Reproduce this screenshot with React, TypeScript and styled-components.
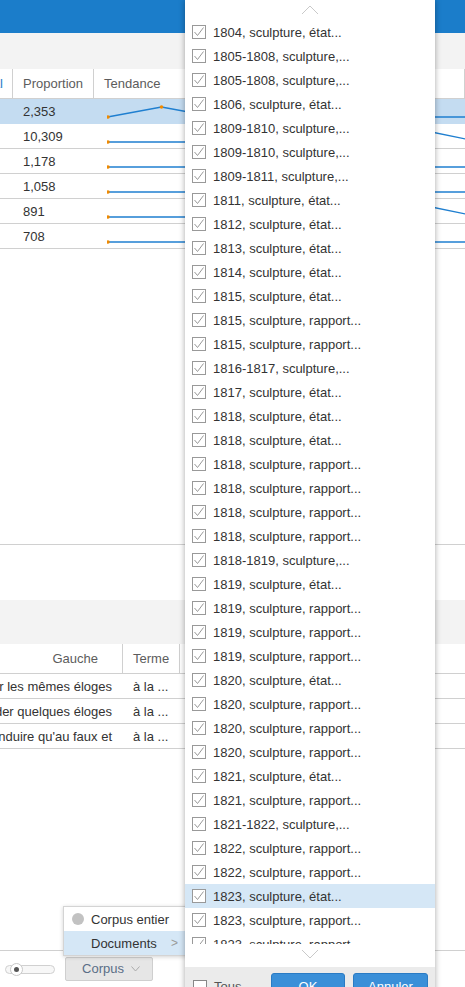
import React from "react";
import styled, { createGlobalStyle } from "styled-components";

const docs = [
  "1804, sculpture, état...",
  "1805-1808, sculpture,...",
  "1805-1808, sculpture,...",
  "1806, sculpture, état...",
  "1809-1810, sculpture,...",
  "1809-1810, sculpture,...",
  "1809-1811, sculpture,...",
  "1811, sculpture, état...",
  "1812, sculpture, état...",
  "1813, sculpture, état...",
  "1814, sculpture, état...",
  "1815, sculpture, état...",
  "1815, sculpture, rapport...",
  "1815, sculpture, rapport...",
  "1816-1817, sculpture,...",
  "1817, sculpture, état...",
  "1818, sculpture, état...",
  "1818, sculpture, état...",
  "1818, sculpture, rapport...",
  "1818, sculpture, rapport...",
  "1818, sculpture, rapport...",
  "1818, sculpture, rapport...",
  "1818-1819, sculpture,...",
  "1819, sculpture, état...",
  "1819, sculpture, rapport...",
  "1819, sculpture, rapport...",
  "1819, sculpture, rapport...",
  "1820, sculpture, état...",
  "1820, sculpture, rapport...",
  "1820, sculpture, rapport...",
  "1820, sculpture, rapport...",
  "1821, sculpture, état...",
  "1821, sculpture, rapport...",
  "1821-1822, sculpture,...",
  "1822, sculpture, rapport...",
  "1822, sculpture, rapport...",
  "1823, sculpture, état...",
  "1823, sculpture, rapport...",
  "1823, sculpture, rapport...",
];

// y of each point inside a 24px row, points every 54px
const trends = [
  { value: "2,353", pts: [18, 8, 18, 18, 18, 18, 18, 18], selected: true },
  { value: "10,309", pts: [18, 18, 18, 18, 18, 18, 8, 19] },
  { value: "1,178", pts: [18, 18, 18, 18, 18, 18, 18, 18] },
  { value: "1,058", pts: [18, 18, 18, 18, 18, 18, 18, 18] },
  { value: "891", pts: [18, 18, 18, 18, 18, 18, 8, 19] },
  { value: "708", pts: [18, 18, 18, 18, 18, 18, 18, 18] },
];

const contexts = [
  { left: "et de répéter les mêmes éloges", term: "à la ..." },
  { left: "pour lui accorder quelques éloges", term: "à la ..." },
  { left: "ne peut le conduire qu'au faux et", term: "à la ..." },
];

const GlobalStyle = createGlobalStyle`
  html, body {
    margin: 0;
    padding: 0;
    overflow: hidden;
  }
  body {
    font-family: "Liberation Sans", Arial, sans-serif;
    font-size: 13px;
    color: #333;
  }
`;

const Page = styled.div`
  position: relative;
  width: 465px;
  height: 987px;
  overflow: hidden;
  display: flex;
  flex-direction: column;
  background: #fff;
`;

const TopBar = styled.div`
  height: 33px;
  background: #1b7dca;
  flex-shrink: 0;
`;

const Panel = styled.div<{ $height: number }>`
  height: ${(p) => p.$height}px;
  border-bottom: 1px solid #d0d0d0;
  display: flex;
  flex-direction: column;
  flex-shrink: 0;
  overflow: hidden;
`;

const Strip = styled.div<{ $height: number }>`
  height: ${(p) => p.$height}px;
  background: #f3f3f3;
  flex-shrink: 0;
`;

const Gap = styled.div`
  height: 55px;
  flex-shrink: 0;
`;

const Row = styled.div<{ $head?: boolean; $selected?: boolean }>`
  display: flex;
  height: ${(p) => (p.$head ? 29 : 24)}px;
  border-bottom: 1px solid ${(p) => (p.$selected ? "#c4dcf1" : "#d0d0d0")};
  background: ${(p) => (p.$selected ? "#c4dcf1" : "transparent")};
  flex-shrink: 0;
`;

const Cell = styled.div<{ $width?: number; $head?: boolean; $right?: boolean; $pad?: number }>`
  width: ${(p) => (p.$width ? `${p.$width}px` : "auto")};
  flex: ${(p) => (p.$width ? "none" : "1")};
  display: flex;
  align-items: center;
  justify-content: ${(p) => (p.$right ? "flex-end" : "flex-start")};
  padding: 0 ${(p) => (p.$right ? p.$pad ?? 11 : 0)}px 0 ${(p) => (p.$right ? 0 : 10)}px;
  box-sizing: border-box;
  border-right: ${(p) => (p.$head ? "1px solid #d0d0d0" : "none")};
  white-space: nowrap;
  overflow: hidden;
  color: ${(p) => (p.$head ? "#5c5c5c" : "#333")};
  position: relative;
`;

const SortedHead = styled.span`
  color: #1b7dca;
`;

const Spark = styled.svg`
  position: absolute;
  left: 13px;
  top: 0;
`;

const BottomBar = styled.div`
  flex: 1;
  display: flex;
  align-items: center;
  gap: 10px;
  padding: 0 0 0 5px;
`;

const SliderTrack = styled.div`
  width: 50px;
  height: 9px;
  border: 1px solid #d0d0d0;
  border-radius: 6px;
  position: relative;
  box-sizing: border-box;
  background: #f7f7f7;
`;

const SliderKnob = styled.div`
  position: absolute;
  left: 4px;
  top: -3px;
  width: 13px;
  height: 13px;
  border-radius: 50%;
  border: 1px solid #c8c8c8;
  background: #fff;
  box-sizing: border-box;
  display: flex;
  align-items: center;
  justify-content: center;
  &::after {
    content: "";
    width: 5px;
    height: 5px;
    border-radius: 50%;
    background: #555;
  }
`;

const CorpusButton = styled.button`
  width: 88px;
  height: 24px;
  margin-top: -1px;
  border: 1px solid #cfcfcf;
  border-radius: 2px;
  background: #e6e6e6;
  color: #5a6e86;
  font: 13px "Liberation Sans", Arial, sans-serif;
  display: flex;
  align-items: center;
  justify-content: center;
  gap: 7px;
  padding: 0 0 0 4px;
`;

const Menu = styled.div`
  position: absolute;
  left: 63px;
  top: 906px;
  width: 124px;
  background: #fff;
  border: 1px solid #d4d4d4;
  box-shadow: 0 1px 4px rgba(0, 0, 0, 0.18);
`;

const MenuItem = styled.div<{ $active?: boolean }>`
  height: 24px;
  display: flex;
  align-items: center;
  padding-left: 27px;
  position: relative;
  background: ${(p) => (p.$active ? "#d5e7f6" : "transparent")};
  color: #333;
`;

const Dot = styled.span`
  position: absolute;
  left: 8px;
  top: 6px;
  width: 12px;
  height: 12px;
  border-radius: 50%;
  background: #c2c2c2;
`;

const Arrow = styled.span`
  position: absolute;
  right: 10px;
  top: 5px;
  color: #999;
  font-size: 12px;
`;

const Dropdown = styled.div`
  position: absolute;
  left: 185px;
  top: 0;
  width: 250px;
  height: 1010px;
  background: #fff;
  box-shadow: 0 0 6px rgba(0, 0, 0, 0.35);
  display: flex;
  flex-direction: column;
`;

const Scroller = styled.div`
  height: 20px;
  display: flex;
  align-items: center;
  justify-content: center;
  flex-shrink: 0;
`;

const List = styled.div`
  height: 924px;
  overflow: hidden;
  flex-shrink: 0;
`;

const Item = styled.div<{ $active?: boolean }>`
  height: 24px;
  display: flex;
  align-items: center;
  gap: 7px;
  padding-left: 7px;
  background: ${(p) => (p.$active ? "#d5e7f6" : "transparent")};
  white-space: nowrap;
`;

const Footer = styled.div`
  margin-top: 3px;
  flex: 1;
  background: #ebebeb;
  display: flex;
  align-items: flex-start;
  padding: 6px 7px 0 8px;
  gap: 8px;
`;

const TousLabel = styled.label`
  display: flex;
  align-items: center;
  gap: 7px;
  margin-top: 6px;
  width: 70px;
  color: #555;
`;

const EmptyBox = styled.span`
  width: 12px;
  height: 12px;
  border: 1px solid #888;
  background: #fff;
`;

const FooterButton = styled.button<{ $width: number }>`
  width: ${(p) => p.$width}px;
  height: 26px;
  border: 1px solid #2a7bc4;
  border-radius: 3px;
  background: #3a8fd8;
  color: #fff;
  font: 13px "Liberation Sans", Arial, sans-serif;
  padding: 0;
  display: flex;
  justify-content: center;
  padding-top: 5px;
`;

const CheckIcon = () => (
  <svg width="14" height="14" viewBox="0 0 14 14">
    <rect x="0.5" y="0.5" width="13" height="13" fill="#fff" stroke="#999" />
    <polyline points="2.5,7 5.5,10.5 11.5,2.5" fill="none" stroke="#999" strokeWidth="1" />
  </svg>
);

const Chevron = ({ up }: { up?: boolean }) => (
  <svg width="18" height="10" viewBox="0 0 18 10">
    <polyline
      points={up ? "1,9 9,1 17,9" : "1,1 9,9 17,1"}
      fill="none"
      stroke="#c9c9c9"
      strokeWidth="1"
    />
  </svg>
);

const Sparkline = ({ pts }: { pts: number[] }) => {
  const xs = pts.map((_, i) => 0.5 + i * 54);
  const line = pts.map((y, i) => `${xs[i]},${y}`).join(" ");
  const max = Math.min(...pts);
  const maxIdx = pts.indexOf(max);
  return (
    <Spark width="400" height="24">
      <polyline points={line} fill="none" stroke="#1f7fd0" strokeWidth="1.3" />
      <circle cx={xs[0] + 0.5} cy={pts[0]} r="1.8" fill="#f08a00" />
      {maxIdx === 1 && <circle cx={xs[1]} cy={pts[1]} r="1.8" fill="#f08a00" />}
    </Spark>
  );
};

export default function App() {
  return (
    <>
      <GlobalStyle />
      <Page>
        <TopBar />
        <Panel $height={511}>
          <Strip $height={36} />
          <Row $head>
            <Cell $width={13} $head $right $pad={9}>
              <SortedHead>Total</SortedHead>
            </Cell>
            <Cell $width={81} $head>
              Proportion
            </Cell>
            <Cell $head>Tendance</Cell>
          </Row>
          {trends.map((t, i) => (
            <Row key={i} $selected={t.selected}>
              <Cell $width={13} />
              <Cell $width={81}>{t.value}</Cell>
              <Cell>
                <Sparkline pts={t.pts} />
              </Cell>
            </Row>
          ))}
        </Panel>
        <Gap />
        <Panel $height={350}>
          <Strip $height={44} />
          <Row $head>
            <Cell $width={123} $head $right $pad={24}>
              Gauche
            </Cell>
            <Cell $width={57} $head>
              Terme
            </Cell>
            <Cell />
          </Row>
          {contexts.map((c, i) => (
            <Row key={i}>
              <Cell $width={123} $right>
                {c.left}
              </Cell>
              <Cell $width={57}>{c.term}</Cell>
              <Cell />
            </Row>
          ))}
        </Panel>
        <BottomBar>
          <SliderTrack>
            <SliderKnob />
          </SliderTrack>
          <CorpusButton>
            Corpus
            <svg width="9" height="6" viewBox="0 0 9 6">
              <polyline points="0.5,0.5 4.5,5 8.5,0.5" fill="none" stroke="#aaa" />
            </svg>
          </CorpusButton>
        </BottomBar>

        <Menu>
          <MenuItem>
            <Dot />
            Corpus entier
          </MenuItem>
          <MenuItem $active>
            Documents
            <Arrow>&gt;</Arrow>
          </MenuItem>
        </Menu>

        <Dropdown>
          <Scroller>
            <Chevron up />
          </Scroller>
          <List>
            {docs.map((d, i) => (
              <Item key={i} $active={i === 36}>
                <CheckIcon />
                {d}
              </Item>
            ))}
          </List>
          <Scroller>
            <Chevron />
          </Scroller>
          <Footer>
            <TousLabel>
              <EmptyBox />
              Tous
            </TousLabel>
            <FooterButton $width={74}>OK</FooterButton>
            <FooterButton $width={75}>Annuler</FooterButton>
          </Footer>
        </Dropdown>
      </Page>
    </>
  );
}
